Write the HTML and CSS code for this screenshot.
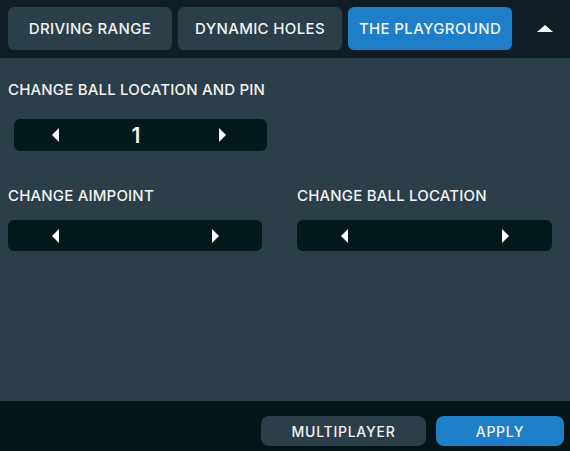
FILE: index.html
```html
<!DOCTYPE html>
<html>
<head>
<meta charset="utf-8">
<link rel="stylesheet" href="styles.css">
</head>
<body>
<div class="app">
  <div class="topbar">
    <div class="tab">DRIVING RANGE</div>
    <div class="tab">DYNAMIC HOLES</div>
    <div class="tab active">THE PLAYGROUND</div>
    <div class="collapse"><span class="up"></span></div>
  </div>
  <div class="content">
    <div class="section first">
      <div class="label">CHANGE BALL LOCATION AND PIN</div>
      <div class="stepper wide">
        <span class="arrow left"></span>
        <span class="value">1</span>
        <span class="arrow right"></span>
      </div>
    </div>
    <div class="row">
      <div class="section">
        <div class="label">CHANGE AIMPOINT</div>
        <div class="stepper">
          <span class="arrow left"></span>
          <span class="arrow right"></span>
        </div>
      </div>
      <div class="section">
        <div class="label">CHANGE BALL LOCATION</div>
        <div class="stepper">
          <span class="arrow left"></span>
          <span class="arrow right"></span>
        </div>
      </div>
    </div>
  </div>
  <div class="bottombar">
    <div class="btn secondary">MULTIPLAYER</div>
    <div class="btn primary">APPLY</div>
  </div>
</div>
</body>
</html>
```
FILE: styles.css
```css
* { box-sizing: border-box; }
html, body { margin: 0; padding: 0; }
body {
  width: 570px;
  height: 451px;
  overflow: hidden;
  font-family: Inter, Roboto, "Liberation Sans", sans-serif;
  color: #f2f4f5;
  background: #2c3e48;
}
.app {
  display: flex;
  flex-direction: column;
  height: 451px;
}
.topbar {
  height: 58px;
  background: #111d24;
  display: flex;
  gap: 6px;
  padding: 7px 0 8px 8px;
}
.tab {
  width: 164px;
  height: 43px;
  border-radius: 6px;
  background: #2c3e48;
  display: flex;
  align-items: center;
  justify-content: center;
  font-size: 15px;
  font-weight: 500;
  letter-spacing: 0.35px;
}
.tab.active { background: #1e7ec8; }
.collapse {
  flex: 1;
  display: flex;
  align-items: center;
  justify-content: center;
  padding-left: 2px;
}
.up {
  width: 0; height: 0;
  border-left: 8px solid transparent;
  border-right: 8px solid transparent;
  border-bottom: 7px solid #ffffff;
  margin-bottom: 1px;
}
.content {
  flex: 1;
  background: #2c3e48;
  padding: 23px 18px 0 8px;
}
.label {
  font-size: 15px;
  font-weight: 500;
  line-height: 18px;
  height: 18px;
  white-space: nowrap;
  letter-spacing: 0.18px;
}
.section.first .stepper {
  margin-top: 20px;
  margin-left: 6px;
  width: 253px;
  height: 32px;
  padding: 0 41px 0 38px;
}
.row {
  display: grid;
  grid-template-columns: 254px 255px;
  column-gap: 35px;
  margin-top: 36px;
}
.row .stepper { margin-top: 15px; }
.stepper {
  height: 31px;
  background: #03181b;
  border-radius: 6px;
  display: flex;
  align-items: center;
  justify-content: space-between;
  padding: 0 43px 0 44px;
}
.arrow {
  width: 0; height: 0;
  border-top: 7px solid transparent;
  border-bottom: 7px solid transparent;
}
.arrow.left { border-right: 7px solid #ffffff; }
.arrow.right { border-left: 7px solid #ffffff; }
.value {
  font-size: 21px;
  font-weight: 600;
  line-height: 20px;
  margin-left: -6px;
  margin-top: 2px;
}
.bottombar {
  height: 50px;
  background: #02161a;
  display: flex;
  justify-content: flex-end;
  gap: 10px;
  padding: 15px 6px 0 0;
}
.btn {
  height: 30px;
  border-radius: 8px;
  display: flex;
  align-items: center;
  justify-content: center;
  font-size: 14px;
  font-weight: 500;
  letter-spacing: 0.75px;
}
.btn.secondary { width: 165px; background: #2c3e48; }
.btn.primary { width: 128px; background: #1e7ec8; }
```
